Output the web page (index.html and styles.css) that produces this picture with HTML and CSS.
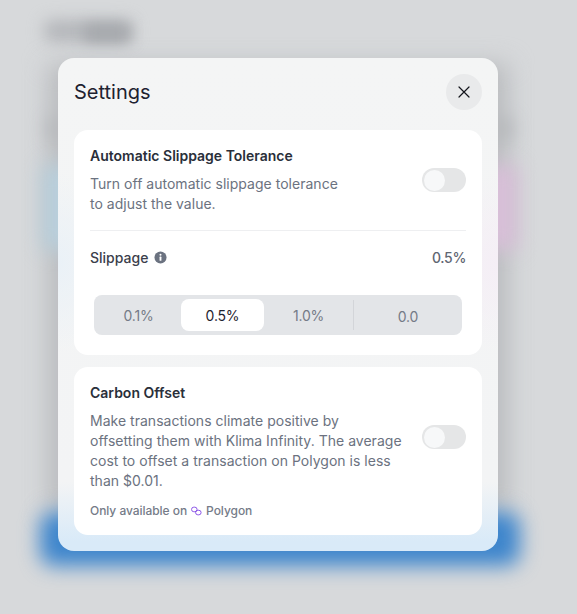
FILE: index.html
```html
<!DOCTYPE html>
<html lang="en">
<head>
<meta charset="utf-8">
<title>Settings</title>
<link rel="stylesheet" href="styles.css">
</head>
<body>
<div class="backdrop" aria-hidden="true">
  <div class="blur blob-title"></div>
  <div class="blur blob-title-dark"></div>
  <div class="blur blob-subtitle"></div>
  <div class="blur blob-panel"></div>
  <div class="blur blob-left"></div>
  <div class="blur blob-right"></div>
  <div class="blur blob-button"></div>
</div>
<main class="modal">
  <header class="modal-head">
    <h1>Settings</h1>
    <button class="close" type="button" aria-label="Close">
      <svg viewBox="0 0 12 12" width="12" height="12"><path d="M1 1l10 10M11 1L1 11" stroke="#14161c" stroke-width="1.2" fill="none" stroke-linecap="round"/></svg>
    </button>
  </header>
  <section class="card card-slippage">
    <div class="option">
      <div class="option-text">
        <h2>Automatic Slippage Tolerance</h2>
        <p class="desc desc-narrow">Turn off automatic slippage tolerance to adjust the value.</p>
      </div>
      <span class="toggle"><span class="knob"></span></span>
    </div>
    <hr class="rule">
    <div class="slip-row">
      <span class="slip-label">Slippage
        <svg class="info" viewBox="0 0 14 14" width="13" height="13"><circle cx="7" cy="7" r="6.5" fill="#6b7280"/><rect x="6" y="6" width="2" height="4.6" rx=".6" fill="#fff"/><circle cx="7" cy="4" r="1.1" fill="#fff"/></svg>
      </span>
      <span class="slip-value">0.5%</span>
    </div>
    <div class="segments">
      <span class="seg seg-a">0.1%</span>
      <span class="seg seg-active">0.5%</span>
      <span class="seg seg-c">1.0%</span>
      <span class="seg-divider"></span>
      <span class="seg seg-input">0.0</span>
    </div>
  </section>
  <section class="card card-carbon">
    <div class="option">
      <div class="option-text">
        <h2>Carbon Offset</h2>
        <p class="desc">Make transactions climate positive by offsetting them with Klima Infinity. The average cost to offset a transaction on Polygon is less than $0.01.</p>
      </div>
      <span class="toggle"><span class="knob"></span></span>
    </div>
    <p class="note">Only available on
      <svg class="poly" viewBox="0 0 12 10" width="11" height="10"><rect x=".6" y=".8" width="6" height="5" rx="2.5" fill="none" stroke="#8247e5" stroke-width="1"/><rect x="5" y="4.2" width="6" height="5" rx="2.5" fill="none" stroke="#8247e5" stroke-width="1"/></svg>
      <span>Polygon</span></p>
  </section>
</main>
</body>
</html>
```
FILE: styles.css
```css
* { box-sizing: border-box; }
body {
  margin: 0;
  height: 614px;
  overflow: hidden;
  position: relative;
  background: #d7d9db;
  font-family: Inter, "Liberation Sans", sans-serif;
  color: #1f2430;
  padding: 58px 79px 0 58px;
}
.backdrop { position: absolute; inset: 0; overflow: hidden; }
.blur { position: absolute; }
.blob-title { left: 44px; top: 20px; width: 88px; height: 22px; background: #b4b6ba; filter: blur(8px); border-radius: 8px; }
.blob-title-dark { left: 84px; top: 24px; width: 46px; height: 18px; background: #a5a8ac; filter: blur(7px); }
.blob-subtitle { left: 48px; top: 118px; width: 464px; height: 22px; background: #b4b6b9; filter: blur(9px); }
.blob-panel { left: 48px; top: 64px; width: 460px; height: 448px; background: #b9bbbe; filter: blur(12px); }
.blob-left { left: 42px; top: 165px; width: 40px; height: 85px; background: #b8cfdc; filter: blur(10px); }
.blob-right { left: 478px; top: 165px; width: 40px; height: 85px; background: #d8bfd8; filter: blur(10px); }
.blob-button { left: 40px; top: 512px; width: 480px; height: 54px; background: #3d85cc; filter: blur(10px); border-radius: 14px; }
.modal {
  position: relative;
  width: 440px;
  height: 493px;
  padding: 0 16px 16px;
  border-radius: 16px;
  background:
    radial-gradient(60px 90px at 0 205px, #eaf1f7 0%, rgba(234, 241, 247, 0) 100%),
    radial-gradient(60px 90px at 100% 205px, #f5eef6 0%, rgba(245, 238, 246, 0) 100%),
    linear-gradient(180deg, #f4f5f5 0%, #f3f4f5 86%, #d9eaf8 98%);
  display: flex;
  flex-direction: column;
  gap: 12px;
}
.modal-head {
  flex: none;
  height: 44px;
  margin-top: 16px;
  display: flex;
  justify-content: space-between;
  align-items: flex-start;
}
h1 { margin: 4px 0 0; font-size: 20px; line-height: 28px; font-weight: 400; color: #1e2230; }
.close {
  width: 36px; height: 36px; padding: 0; border: 0;
  border-radius: 50%;
  background: #e9eaeb;
  display: flex; align-items: center; justify-content: center;
}
.card { flex: none; background: #fff; border-radius: 14px; padding: 16px; }
.card-slippage { height: 225px; }
.card-carbon { height: 168px; }
h2 { margin: 0; font-size: 14px; line-height: 20px; font-weight: 600; color: #2a2f3a; }
.option { display: flex; justify-content: space-between; align-items: center; }
.desc { margin: 8px 0 0; font-size: 14px; line-height: 20px; color: #6b7280; max-width: 314px; letter-spacing: .02px; }
.desc-narrow { max-width: 260px; }
.toggle {
  flex: none;
  width: 44px; height: 24px;
  padding: 1.5px;
  border-radius: 12px;
  background: #e5e6e7;
}
.knob { display: block; width: 21px; height: 21px; border-radius: 50%; background: #f7f8f9; }
.rule { margin: 16px 0 0; border: 0; border-top: 1px solid #eeeff1; }
.slip-row { display: flex; justify-content: space-between; align-items: center; margin-top: 16px; height: 20px; }
.slip-label { font-size: 14px; font-weight: 500; color: #3b404b; display: flex; align-items: center; gap: 6px; }
.slip-value { font-size: 14px; font-weight: 500; color: #5f6672; letter-spacing: -.3px; }
.segments {
  margin: 28px 4px 0;
  height: 40px;
  padding: 4px;
  border-radius: 8px;
  background: #e3e5e8;
  display: flex;
  align-items: center;
  font-size: 14px;
  color: #757b87;
}
.seg { display: flex; align-items: center; justify-content: center; height: 32px; letter-spacing: -.2px; }
.seg-a { width: 83px; padding-right: 2px; }
.seg-active { width: 83px; background: #fff; border-radius: 8px; color: #1f2430; }
.seg-c { width: 89px; }
.seg-divider { width: 1px; height: 30px; background: #d3d5d9; }
.seg-input { flex: 1; padding: 2px 0 0 4px; }
.note { margin: 11px 0 0; font-size: 12px; line-height: 18px; font-weight: 500; letter-spacing: -.05px; color: #757b88; display: flex; align-items: center; gap: 4px; }
```
